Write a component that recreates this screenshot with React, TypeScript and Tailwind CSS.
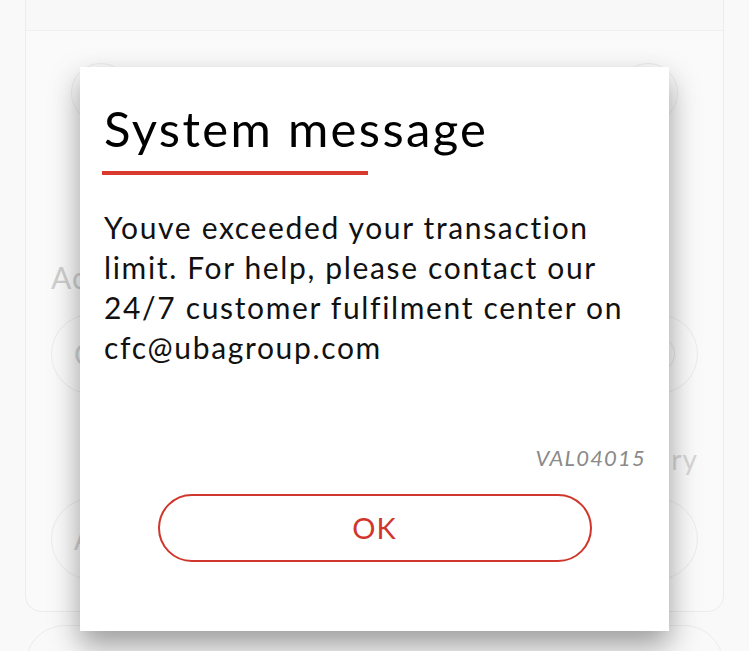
import React from 'react';

const font = { fontFamily: 'Lato, "Open Sans", sans-serif' };

const BackgroundPage: React.FC = () => {
    return (
        <div className="flex flex-col w-full h-full px-[25px] bg-[#f9f9f9]">
            <div className="-mt-[20px] h-[632px] shrink-0 w-full rounded-2xl border border-[#ececec] bg-[#fafafa] flex flex-col">
                <div className="h-[50px] w-full border-b border-[#f0f0f0] bg-[#f8f8f8]" />
                <div className="flex flex-col px-[25px] pt-[32px]">
                    <div className="flex flex-row justify-between px-[20px]">
                        <div className="w-[60px] h-[60px] rounded-full border border-[#ececec]" />
                        <div className="w-[60px] h-[60px] rounded-full border border-[#ececec]" />
                    </div>
                    <span className="mt-[132px] text-[30px] tracking-[1px] text-[#cfcfcf]">Account</span>
                    <div className="mt-[14px] h-[80px] w-full rounded-full border border-[#ececec] flex items-center px-[22px] justify-between">
                        <span className="text-[28px] text-[#d2d2d2]">C</span>
                        <div className="w-[36px] h-[36px] rounded-full border border-[#e6e6e6]" />
                    </div>
                    <span className="mt-[44px] self-end text-[28px] tracking-[1px] text-[#d6d6d6]">Beneficiary</span>
                    <div className="mt-[18px] h-[82px] w-full rounded-full border border-[#ececec] flex items-center px-[22px]">
                        <span className="text-[28px] text-[#d2d2d2]">A</span>
                    </div>
                </div>
            </div>
            <div className="mt-[13px] h-[60px] shrink-0 w-full rounded-t-[40px] border border-[#ececec] bg-[#f9f9f9]" />
        </div>
    );
};

const SystemMessage: React.FC = () => {
    return (
        <div className="absolute left-[80px] top-[67px] w-[589px] h-[564px] bg-white shadow-[0_14px_28px_rgba(0,0,0,0.38)] flex flex-col pl-[24px] pr-[22px]">
            <h1 className="mt-[33px] text-[49px] leading-[56px] tracking-[2.35px] text-black">System message</h1>
            <div className="mt-[15px] w-[266px] h-[4px] bg-[#d93a2d] -ml-[2px]" />
            <p className="mt-[32px] text-[30px] leading-[40px] tracking-[1.65px] text-[#111] whitespace-nowrap">
                Youve exceeded your transaction<br />
                limit. For help, please contact our<br />
                24/7 customer fulfilment center on<br />
                cfc@ubagroup.com
            </p>
            <span className="mt-auto self-end text-[22px] italic tracking-[1.2px] text-[#8a8a8a] mr-[1px]">VAL04015</span>
            <button className="mt-[20px] mb-[69px] self-center -ml-[2px] w-[434px] h-[68px] rounded-full border-2 border-[#d0362b] text-[#d0362b] text-[29px] tracking-[1px]">
                OK
            </button>
        </div>
    );
};

export default function App() {
    return (
        <div className="relative w-[749px] h-[651px] overflow-hidden" style={font}>
            <BackgroundPage />
            <SystemMessage />
        </div>
    );
}
